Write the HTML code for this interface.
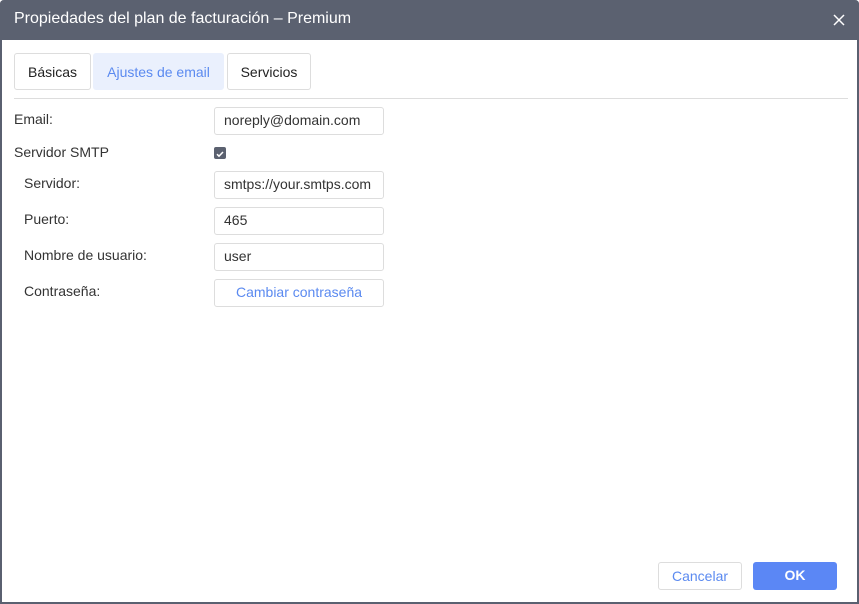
<!DOCTYPE html><html><head><style>
body{margin:0;width:859px;height:604px;overflow:hidden;font-family:"Liberation Sans",sans-serif;font-size:14px;color:#333;}
.dlg{position:absolute;left:0;top:0;width:855px;height:602px;border:2px solid #5a6070;border-top:0;border-radius:4px 4px 0 0;background:#fff;}
.hd{position:absolute;left:-2px;top:0;width:859px;height:40px;background:#5b6170;color:#fff;font-size:16px;line-height:38px;border-radius:4px 4px 0 0;}
.hd span{position:absolute;left:14px;}
.x{position:absolute;right:14px;top:14px;width:12px;height:12px}
.tab{position:absolute;top:53px;height:37px;line-height:36px;border:1px solid #ddd;border-radius:3px;text-align:center;color:#222;box-sizing:border-box}
.sep{position:absolute;left:12px;top:98px;width:834px;height:1px;background:#ddd}
.l{position:absolute;color:#333}
.in{position:absolute;left:212px;width:170px;height:28px;border:1px solid #ddd;border-radius:3px;line-height:25px;padding-left:9px;box-sizing:border-box;color:#333}
.btn{position:absolute;top:562px;height:28px;border-radius:3px;text-align:center;line-height:26px;box-sizing:border-box}
</style></head><body>
<div class="dlg">
<div class="hd"><span>Propiedades del plan de facturación – Premium</span>
<svg class="x" viewBox="0 0 12 12"><path d="M1 1L11 11M11 1L1 11" stroke="#fff" stroke-width="1.5"/></svg></div>
<div class="tab" style="left:12px;width:77px">Básicas</div>
<div class="tab" style="left:91px;width:131px;background:#eaf0fd;border-color:#eaf0fd;color:#5b8af0">Ajustes de email</div>
<div class="tab" style="left:225px;width:84px">Servicios</div>
<div class="sep"></div>
<div class="l" style="left:12px;top:111px">Email:</div>
<div class="in" style="top:107px">noreply@domain.com</div>
<div class="l" style="left:12px;top:144px">Servidor SMTP</div>
<div style="position:absolute;left:212px;top:147px;width:12px;height:12px;background:#5b6170;border-radius:2px"><svg viewBox="0 0 12 12" width="12" height="12"><path d="M3 6.2L5 8.2L9 4" stroke="#fff" stroke-width="1.5" fill="none"/></svg></div>
<div class="l" style="left:22px;top:175px">Servidor:</div>
<div class="in" style="top:171px">smtps://your.smtps.com</div>
<div class="l" style="left:22px;top:211px">Puerto:</div>
<div class="in" style="top:207px">465</div>
<div class="l" style="left:22px;top:247px">Nombre de usuario:</div>
<div class="in" style="top:243px">user</div>
<div class="l" style="left:22px;top:283px">Contraseña:</div>
<div class="in" style="top:279px;padding:0;text-align:center;color:#5b8af0">Cambiar contraseña</div>
<div class="btn" style="left:656px;width:84px;border:1px solid #ddd;color:#5b8af0">Cancelar</div>
<div class="btn" style="left:751px;width:84px;background:#5b87f5;color:#fff;font-weight:bold">OK</div>
</div>
</body></html>
